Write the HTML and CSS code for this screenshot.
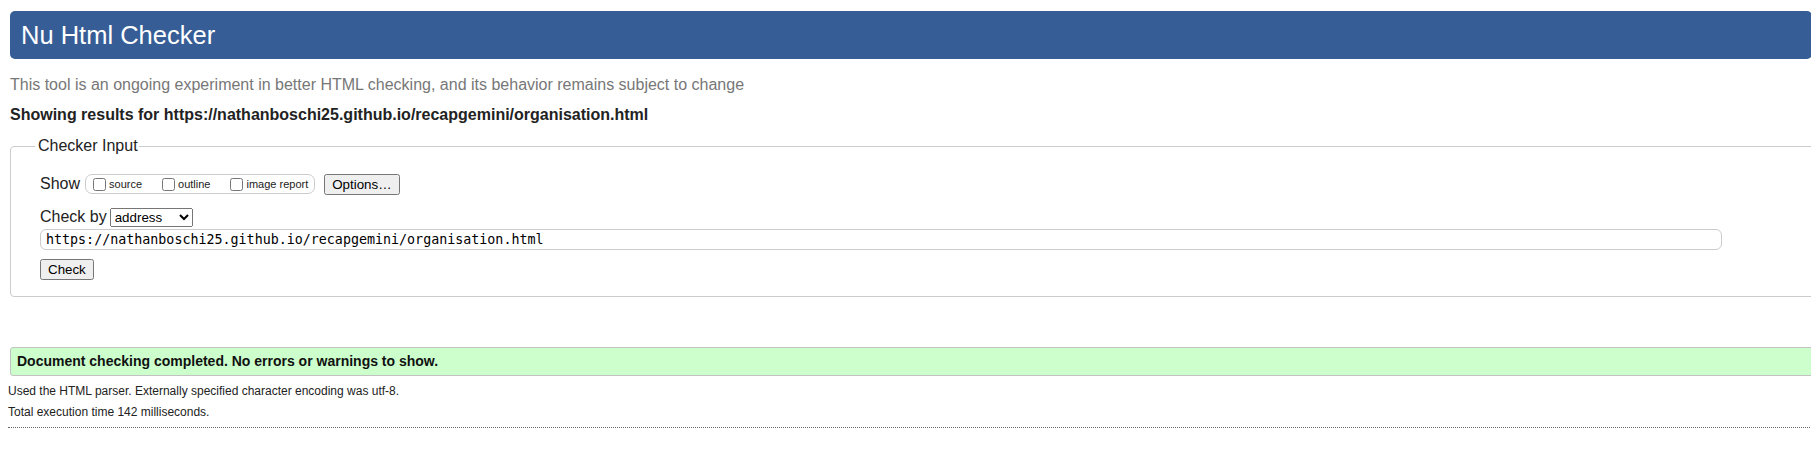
FILE: index.html
```html
<!DOCTYPE html>
<html lang="en">
<head>
<meta charset="utf-8">
<title>Nu Html Checker</title>
<link rel="stylesheet" href="styles.css">
</head>
<body>
<div class="page">
  <h1 class="title">Nu Html Checker</h1>
  <p class="intro">This tool is an ongoing experiment in better HTML checking, and its behavior remains subject to change</p>
  <p class="showing">Showing results for https://nathanboschi25.github.io/recapgemini/organisation.html</p>
  <fieldset class="input-box">
    <legend class="legend">Checker Input</legend>
    <div class="row show-row">
      <span class="label">Show</span>
      <span class="opts">
        <label class="opt"><input type="checkbox" class="cb">source</label>
        <label class="opt"><input type="checkbox" class="cb">outline</label>
        <label class="opt"><input type="checkbox" class="cb">image report</label>
      </span>
      <button type="button" class="btn options-btn">Options…</button>
    </div>
    <div class="row by-row">
      <span class="label">Check by</span>
      <select class="select">
        <option selected>address</option>
        <option>file upload</option>
        <option>text input</option>
      </select>
    </div>
    <div class="row url-row">
      <input class="url" type="url" value="https://nathanboschi25.github.io/recapgemini/organisation.html">
    </div>
    <div class="row check-row">
      <button type="button" class="btn check-btn">Check</button>
    </div>
  </fieldset>
  <div class="success">Document checking completed. No errors or warnings to show.</div>
  <p class="details">Used the HTML parser. Externally specified character encoding was utf-8.</p>
  <p class="details">Total execution time 142 milliseconds.</p>
  <hr class="dots">
</div>
</body>
</html>
```
FILE: styles.css
```css
html { overflow: hidden; }
body { margin: 0; background: #fff; font-family: "Liberation Sans", Arial, sans-serif; color: #222; }
.page { width: 1840px; }
.title {
  box-sizing: border-box;
  width: 1802px;
  margin: 11px 0 0 10px;
  height: 48px;
  line-height: 48px;
  padding-left: 11px;
  background: #365d95;
  color: #fff;
  font-size: 25.5px;
  font-weight: normal;
  border-radius: 5px;
}
.intro { margin: 16px 0 0 10px; color: #777; font-size: 16px; line-height: 20px; }
.showing { margin: 10px 0 0 10px; font-weight: bold; font-size: 16px; line-height: 20px; color: #222; }
.input-box {
  margin: 12px 0 0 10px;
  padding: 18px 0 16px 29px;
  border: 1px solid #ccc;
  border-radius: 4px;
}
.legend { margin-left: -5px; padding: 0 1px 0 3px; font-size: 16px; line-height: 18px; color: #222; }
.row { display: flex; align-items: center; height: 22px; }
.label { font-size: 16px; color: #222; }
.show-row .label { margin-right: 5px; }
.by-row .label { margin-right: 3px; }
.opts {
  box-sizing: border-box;
  display: flex; align-items: center;
  height: 20px;
  border: 1px solid #ccc; border-radius: 7px;
  padding: 0 6px 0 3px;
  font-size: 11px; color: #222;
}
.opt { display: flex; align-items: center; margin-right: 16px; }
.opt:last-child { margin-right: 0; }
.cb { width: 13px; height: 13px; margin: 0 3px 0 4px; }
.btn {
  font-family: "Liberation Sans", Arial, sans-serif;
  font-size: 13.33px;
  padding: 1px 6px;
  height: 21px;
}
.options-btn { margin-left: 9px; }
.by-row { margin-top: 11px; }
.select {
  font-family: "Liberation Sans", Arial, sans-serif;
  font-size: 13.33px;
  height: 19px;
}
.url-row { height: 21px; margin-top: 1px; }
.url {
  box-sizing: border-box;
  width: 1682px; height: 21px;
  border: 1px solid #ccc; border-radius: 6px;
  padding: 0 0 0 5px;
  font-family: "DejaVu Sans Mono", monospace; font-size: 13.33px; color: #000;
  outline: none;
}
.check-row { margin-top: 9px; height: 21px; }
.success {
  box-sizing: border-box;
  margin: 50px 0 0 10px; height: 29px; line-height: 27px;
  background: #ccffcc; border: 1px solid #c2c2c2; border-radius: 3px;
  padding-left: 6px; font-weight: bold; font-size: 14px; color: #111;
}
.details { margin: 6px 0 0 8px; font-size: 12px; color: #222; line-height: 15px; }
.success + .details { margin-top: 8px; }
.dots { margin: 7px 0 0 8px; border: 0; border-top: 1px dotted #666; height: 0; }
```
